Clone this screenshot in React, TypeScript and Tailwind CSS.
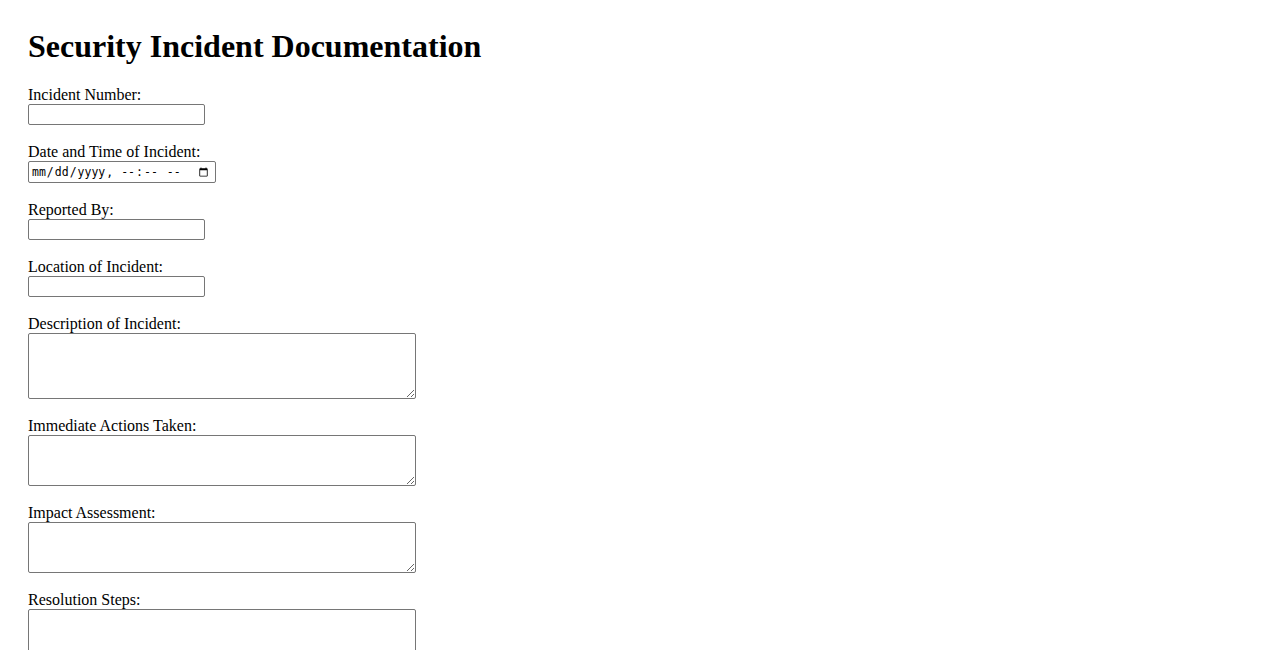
import { useState } from "react";

const labelCls = "block text-[16px] leading-[18px] text-black";
const inputCls =
  "block w-[177px] h-[21px] border border-[#767676] rounded-[2px] bg-white px-[2px] py-[1px] text-[13.33px] font-['DejaVu_Sans',sans-serif] mb-[18px]";
const areaCls =
  "block w-[388px] border border-[#767676] rounded-[2px] bg-white px-[2px] py-[2px] text-[13.33px] font-['DejaVu_Sans_Mono',monospace] mb-[18px]";

const App = () => {
  const [form, setForm] = useState({
    number: "",
    datetime: "",
    reporter: "",
    location: "",
    description: "",
    actions: "",
    impact: "",
    resolution: "",
  });

  const update = (key: string) => (e: any) =>
    setForm({ ...form, [key]: e.target.value });

  return (
    <div className="min-h-screen bg-white p-[28px] font-['Liberation_Serif','Times_New_Roman',serif] text-black">
      <h1 className="text-[32px] leading-[37px] font-bold mb-[21.44px]">
        Security Incident Documentation
      </h1>

      <form>
        <label className={labelCls}>Incident Number:</label>
        <input
          type="text"
          value={form.number}
          onChange={update("number")}
          className={inputCls}
        />

        <label className={labelCls}>Date and Time of Incident:</label>
        <input
          type="datetime-local"
          value={form.datetime}
          onChange={update("datetime")}
          className="block w-[188px] h-[22px] border border-[#767676] rounded-[2px] bg-white pl-[2px] pr-[4px] py-[1px] text-[11.5px] font-['DejaVu_Sans_Mono',monospace] mb-[18px]"
        />

        <label className={labelCls}>Reported By:</label>
        <input
          type="text"
          value={form.reporter}
          onChange={update("reporter")}
          className={inputCls}
        />

        <label className={labelCls}>Location of Incident:</label>
        <input
          type="text"
          value={form.location}
          onChange={update("location")}
          className={inputCls}
        />

        <label className={labelCls}>Description of Incident:</label>
        <textarea
          value={form.description}
          onChange={update("description")}
          className={areaCls + " h-[66px]"}
        />

        <label className={labelCls}>Immediate Actions Taken:</label>
        <textarea
          value={form.actions}
          onChange={update("actions")}
          className={areaCls + " h-[51px]"}
        />

        <label className={labelCls}>Impact Assessment:</label>
        <textarea
          value={form.impact}
          onChange={update("impact")}
          className={areaCls + " h-[51px]"}
        />

        <label className={labelCls}>Resolution Steps:</label>
        <textarea
          value={form.resolution}
          onChange={update("resolution")}
          className={areaCls + " h-[51px]"}
        />
      </form>
    </div>
  );
};

export default App;
